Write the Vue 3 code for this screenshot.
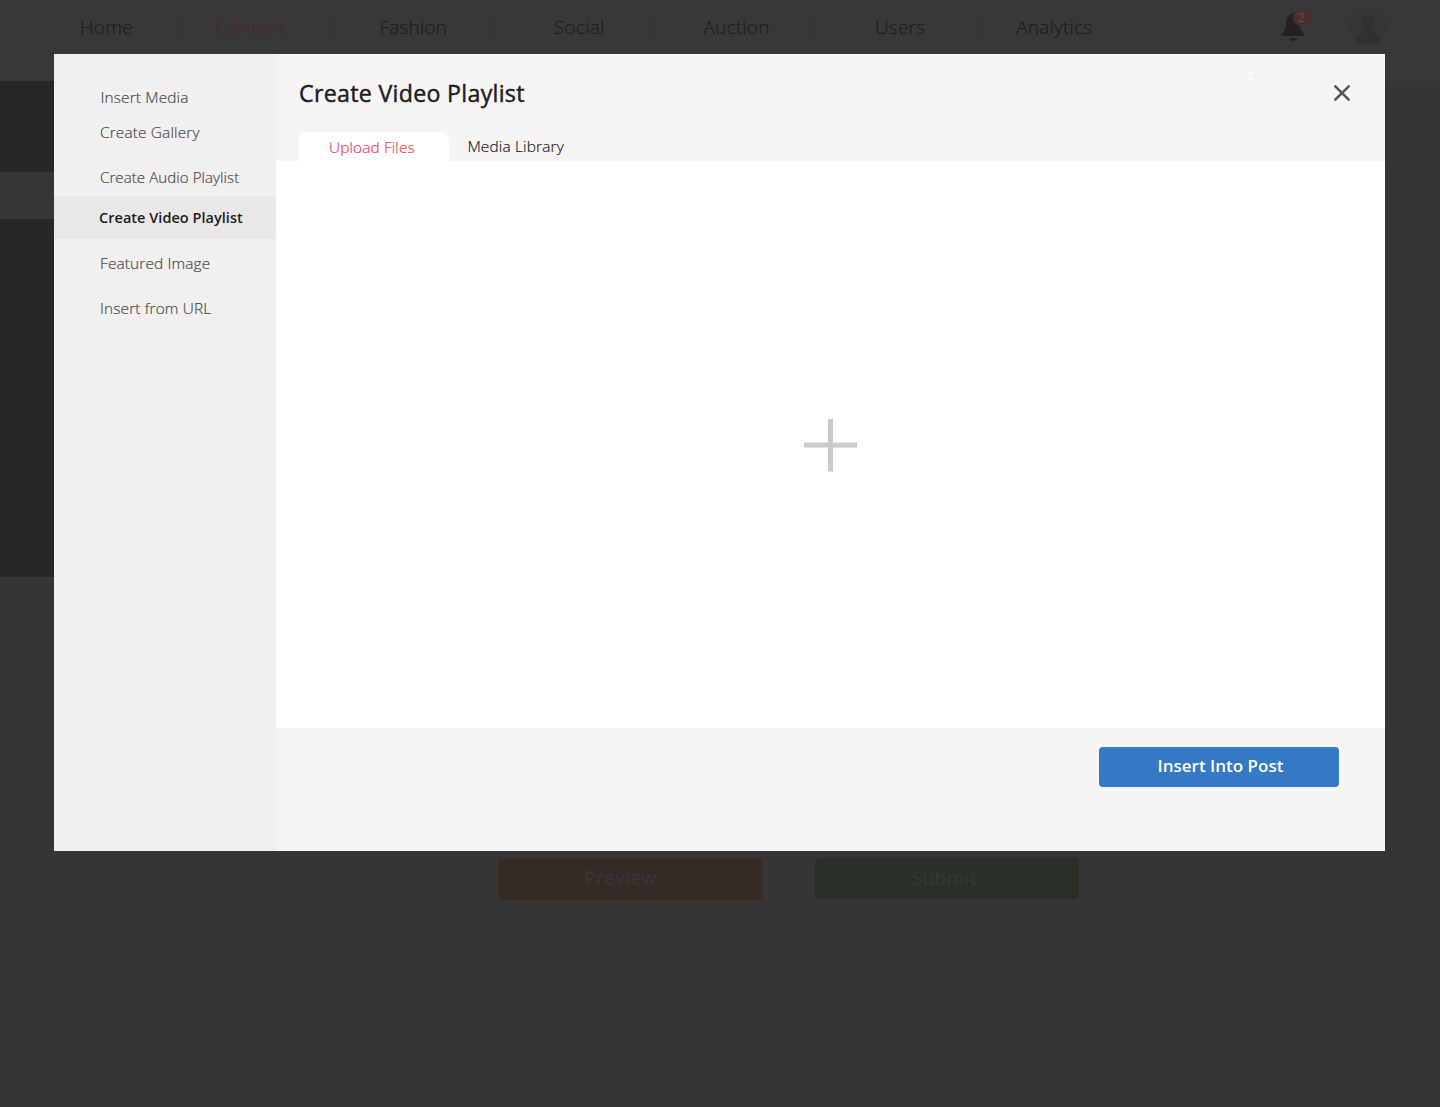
<script setup>
const navItems = [
  { label: 'Home', width: 177, indent: 80 },
  { label: 'Content', width: 152, indent: 39.5, active: true },
  { label: 'Fashion', width: 162, indent: 50.5 },
  { label: 'Social', width: 163, indent: 63 },
  { label: 'Auction', width: 161, indent: 49.5 },
  { label: 'Users', width: 162, indent: 60 },
  { label: 'Analytics', width: 160, indent: 39.3 }
]

const sections = [
  { label: 'Insert Media', key: 'media' },
  { label: 'Create Gallery', key: 'gallery' },
  { label: 'Create Audio Playlist', key: 'audio' },
  { label: 'Create Video Playlist', key: 'video' },
  { label: 'Featured Image', key: 'featured' },
  { label: 'Insert from URL', key: 'url' }
]
</script>

<template>
  <div class="page">
    <header class="topbar">
      <nav class="nav">
        <a
          v-for="item in navItems"
          :key="item.label"
          class="nav-item"
          :class="{ active: item.active }"
          :style="{ width: item.width + 'px', paddingLeft: item.indent + 'px' }"
        ><span>{{ item.label }}</span></a>
      </nav>
      <div class="bell">
        <svg width="22" height="29" viewBox="0 0 22 29">
          <path d="M11 0C9.9 0 9.4.7 9.3 1.6 5.600 2.500 4.200 5.300 4.100 9.300C4 14.500 3.500 17.300 0 21.300V23H22V21.300C18.500 17.300 18 14.500 17.900 9.300C17.800 5.300 16.400 2.500 12.700 1.600C12.600.7 12.100 0 11 0Z" fill="#222" />
          <path d="M7.200 25H14.800C14.200 27 12.800 28.300 11 28.300S7.800 27 7.200 25Z" fill="#252525" />
        </svg>
        <span class="badge">2</span>
      </div>
      <svg class="avatar" width="38" height="38" viewBox="0 0 38 38">
        <circle cx="19" cy="19" r="17.700" fill="#363636" stroke="#343434" stroke-width=".6" />
        <path d="M19 7.500C23 7.500 25.300 9.700 25.100 14C24.900 19 22.500 24.200 19 24.200S13.100 19 12.900 14C12.700 9.700 15 7.500 19 7.500Z" fill="#303030" />
        <path d="M14.500 24.200Q19 27.600 23.500 24.200C28 24.800 31.700 27.500 31.700 30.500C28.500 34.300 24 36.700 19 36.700S9.500 34.300 6.300 30.500C6.300 27.500 10 24.800 14.500 24.200Z" fill="#303030" />
      </svg>
    </header>
    <aside class="side"><div class="side-active"></div></aside>
    <div class="post-actions">
      <button class="preview">Preview</button>
      <button class="submit">Submit</button>
    </div>

    <section class="modal">
      <aside class="menu">
        <a v-for="s in sections" :key="s.key" class="menu-item" :class="s.key"><span>{{ s.label }}</span></a>
      </aside>
      <div class="main">
        <header class="head">
          <div class="title-row">
            <h1><span>Create Video Playlist</span></h1>
            <svg class="close" width="18" height="18" viewBox="0 0 18 18">
              <path d="M2.300 2.300L15.700 15.700M15.700 2.300L2.300 15.700" stroke="#555657" stroke-width="2.600" stroke-linecap="round" />
            </svg>
          </div>
          <div class="tabs">
            <a class="tab upload"><span>Upload Files</span></a>
            <a class="tab library"><span>Media Library</span></a>
          </div>
        </header>
        <div class="drop">
          <svg width="53" height="53" viewBox="0 0 53 53">
            <path d="M26.500 0V52.500M0 26.100H53" stroke="#cbcaca" stroke-width="5" />
          </svg>
        </div>
        <footer class="foot">
          <button class="insert">Insert Into Post</button>
        </footer>
      </div>
      <span class="count">2</span>
    </section>
  </div>
</template>

<style>
body { margin: 0; background: #353535; }
</style>

<style scoped>
.page {
  position: relative;
  width: 1440px;
  height: 1107px;
  overflow: hidden;
  background: #353535;
  font-family: "Open Sans", sans-serif;
}
.page * { box-sizing: border-box; }
button { border: 0; padding: 0; font-family: inherit; display: block; }
span { white-space: nowrap; }
.topbar { display: flex; height: 81px; background: #383838; }
.nav { display: flex; width: 1137px; padding-top: 16px; }
.nav-item {
  height: 25px;
  line-height: 23px;
  font-size: 19px;
  font-weight: 300;
  letter-spacing: .2px;
  -webkit-text-stroke: .25px currentColor;
  color: #1f1f1f;
  border-right: 1px solid #343434;
}
.nav-item:last-child { border-right: 0; }
.nav-item.active { color: #4b2b2d; }
.bell { position: relative; width: 22px; height: 29px; margin: 13px 0 0 145px; }
.bell svg { display: block; }
.badge {
  position: absolute;
  left: 11px;
  top: -4px;
  width: 17px;
  height: 17px;
  border-radius: 50%;
  background: #502c2d;
  color: #6b4c4c;
  font-size: 12px;
  line-height: 17px;
  text-align: center;
}
.avatar { margin: 8px 0 0 45px; }
.side { width: 54px; height: 496px; padding-top: 91px; background: #262729; }
.side-active { height: 47px; background: #353736; }
.post-actions { display: flex; gap: 53px; padding: 281px 0 0 498px; }
.post-actions button {
  width: 264px;
  height: 41px;
  border-radius: 4px;
  font-size: 19px;
  font-weight: 600;
  line-height: 39px;
}
.preview { margin-top: 1px; padding-right: 19px; padding-bottom: 2px; background: #362a25; color: #353535; }
.submit { padding-right: 5px; background: #2a3027; color: #353535; }

.modal {
  position: absolute;
  left: 54px;
  top: 54px;
  display: flex;
  width: 1331px;
  height: 797px;
}
.menu { width: 222px; padding-top: 26px; background: #f1eff0; }
.menu-item {
  display: flex;
  align-items: center;
  height: 35px;
  padding-left: 46px;
  font-size: 15.400px;
  font-weight: 300;
  letter-spacing: .15px;
  -webkit-text-stroke: .2px currentColor;
  color: #4c4c4e;
}
.media { padding-left: 46.500px; }
.gallery { height: 34px; }
.audio { height: 47px; padding-top: 8px; font-size: 15px; letter-spacing: .1px; }
.video {
  height: 43px;
  padding-left: 45px;
  background: #e9e7e8;
  color: #1d1e20;
  font-size: 14.500px;
  font-weight: 600;
  letter-spacing: .03px;
  -webkit-text-stroke: 0;
}
.featured { height: 49px; }
.url { height: 41px; }
.main { display: flex; flex-direction: column; width: 1109px; }
.head { height: 107px; background: #f6f4f5; }
.title-row { display: flex; justify-content: space-between; height: 78px; padding: 23px 34px 0 23px; }
h1 {
  margin: 0;
  font-size: 23.200px;
  line-height: 32px;
  font-weight: 400;
  letter-spacing: .3px;
  -webkit-text-stroke: .45px currentColor;
  color: #1f2021;
}
.close { margin-top: 7px; }
.tabs { display: flex; padding-left: 23px; }
.tab {
  height: 29px;
  font-size: 15.400px;
  line-height: 32px;
  font-weight: 300;
  letter-spacing: .12px;
  -webkit-text-stroke: .2px currentColor;
}
.upload { width: 150px; padding-left: 30px; border-radius: 8px 8px 0 0; background: #fff; color: #ef4056; }
.library { padding-left: 18.400px; line-height: 30px; letter-spacing: .18px; color: #1d1e20; }
.drop { display: flex; justify-content: center; height: 567px; padding-top: 258px; background: #fff; }
.foot { display: flex; justify-content: flex-end; height: 123px; padding: 19px 46px 0 0; background: #f6f4f5; }
.insert {
  width: 240px;
  height: 40px;
  padding: 0 0 2px 3px;
  border-radius: 4px;
  background: #3578c5;
  color: #fff;
  font-size: 17px;
  font-weight: 600;
  line-height: 38px;
}
.count { position: absolute; left: 1194px; top: 14px; font-size: 10px; line-height: 16px; font-weight: 600; color: #fff; }
</style>
